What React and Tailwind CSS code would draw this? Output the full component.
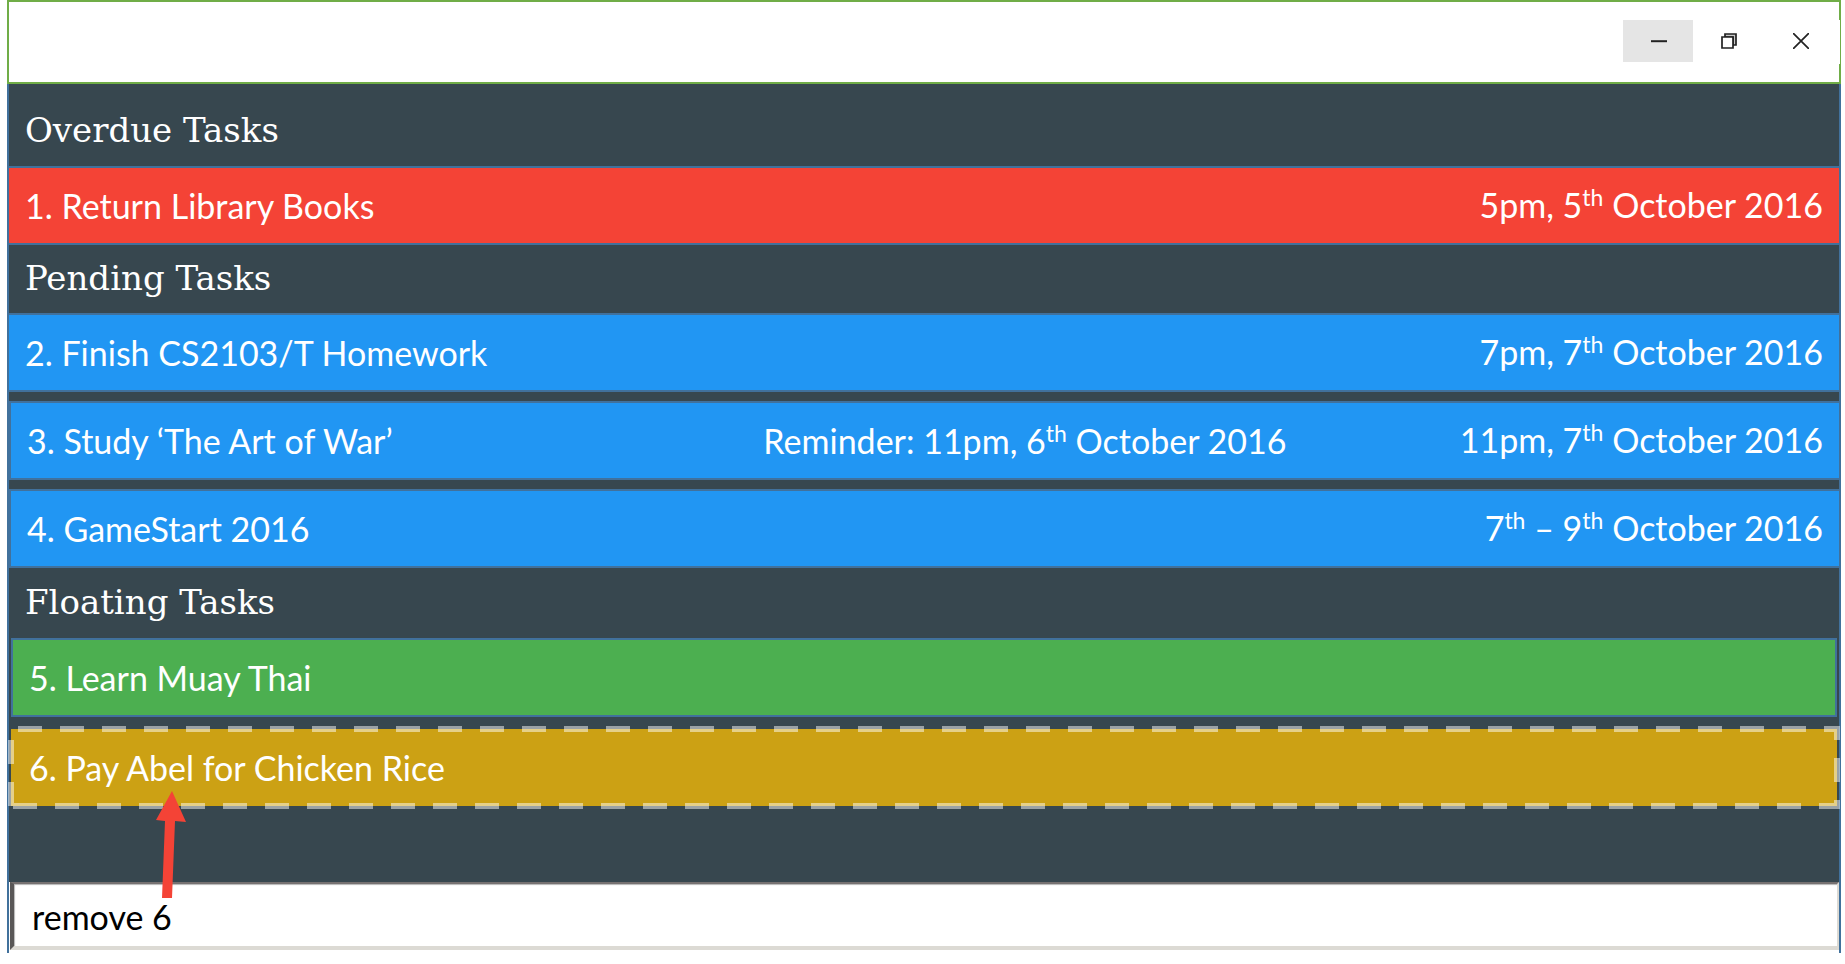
const textFont = "font-['Lato',sans-serif]";
const rowBase = "relative flex h-[79px] items-center border-[#41719c] px-4";
const dateClass = "ml-auto pb-[2px]";

function Ordinal({ n }) {
  return (
    <>
      {n}
      <sup className="relative -top-3 align-baseline text-[23px] leading-none">th</sup>
    </>
  );
}

function SectionTitle({ children, className }) {
  return (
    <h2
      className={`flex items-center px-4 font-['DejaVu_Serif',serif] text-[34px] leading-10 font-normal ${className}`}
    >
      {children}
    </h2>
  );
}

function SelectionOutline() {
  return (
    <svg
      className="pointer-events-none absolute -inset-[3px] h-[calc(100%+6px)] w-[calc(100%+6px)]"
      aria-hidden="true"
    >
      <g opacity="0.5" stroke="#fff" strokeWidth="6" strokeDasharray="24 18">
        <line x1="0" y1="3" x2="100%" y2="3" strokeDashoffset="32" />
        <line x1="100%" y1="0" x2="100%" y2="100%" strokeDashoffset="10" transform="translate(-3 0)" />
        <line x1="100%" y1="100%" x2="0" y2="100%" strokeDashoffset="3" transform="translate(0 -3)" />
        <line x1="3" y1="100%" x2="3" y2="0" transform="translate(0 -3)" />
      </g>
    </svg>
  );
}

function TitleBar() {
  return (
    <header className="flex h-[84px] items-start justify-end border-2 border-[#70ad47] bg-white pt-[18px] text-[#222]">
      <button aria-label="Minimize" className="flex h-[42px] w-[70px] items-center justify-center bg-[#e5e5e5] pl-[2px]">
        <svg width="16" height="16" viewBox="0 0 16 16">
          <path d="M0 8.2h16" stroke="currentColor" strokeWidth="2" />
        </svg>
      </button>
      <button aria-label="Restore" className="flex h-[42px] w-[72px] items-center justify-center">
        <svg width="16" height="16" viewBox="0 0 16 16" fill="none" stroke="currentColor" strokeWidth="1.7">
          <path d="M4 4V1h11v11h-3V4z" fill="#c8c8c8" />
          <path d="M1 4h11v11H1z" fill="#fff" />
        </svg>
      </button>
      <button aria-label="Close" className="-mr-px flex h-[44px] w-[75px] items-center justify-center bg-white pr-[4px] pb-[3px]">
        <svg width="16" height="16" viewBox="0 0 16 16" stroke="currentColor" strokeWidth="1.7">
          <path d="M0 0l16 16M16 0L0 16" />
        </svg>
      </button>
    </header>
  );
}

export default function App() {
  return (
    <div className="min-h-screen bg-white pr-1 pl-[7px]">
      <TitleBar />
      <main className={`border-x-2 border-[#41719c] bg-[#37474f] text-[34px] leading-10 text-white ${textFont}`}>
        <SectionTitle className="h-[82px] pt-[10px]">Overdue Tasks</SectionTitle>
        <ul>
          <li className={`${rowBase} border-y-2 bg-[#f44336]`}>
            <span>1. Return Library Books</span>
            <span className={dateClass}>
              5pm, <Ordinal n="5" /> October 2016
            </span>
          </li>
        </ul>
        <SectionTitle className="h-[68px] pb-[2px]">Pending Tasks</SectionTitle>
        <ul className="flex flex-col gap-[9px]">
          <li className={`${rowBase} border-y-2 bg-[#2196f3]`}>
            <span>2. Finish CS2103/T Homework</span>
            <span className={dateClass}>
              7pm, <Ordinal n="7" /> October 2016
            </span>
          </li>
          <li className={`${rowBase} border-y-2 border-l-2 bg-[#2196f3]`}>
            <span className="w-[41%]">3. Study ‘The Art of War’</span>
            <span>
              Reminder: 11pm, <Ordinal n="6" /> October 2016
            </span>
            <span className={dateClass}>
              11pm, <Ordinal n="7" /> October 2016
            </span>
          </li>
          <li className={`${rowBase} border-y-2 border-l-2 bg-[#2196f3]`}>
            <span>4. GameStart 2016</span>
            <span className={dateClass}>
              <Ordinal n="7" /> – <Ordinal n="9" /> October 2016
            </span>
          </li>
        </ul>
        <SectionTitle className="h-[70px] pb-[2px]">Floating Tasks</SectionTitle>
        <ul className="flex flex-col gap-3 px-[2px]">
          <li className={`${rowBase} border-2 bg-[#4caf50]`}>
            <span>5. Learn Muay Thai</span>
          </li>
          <li className="relative flex h-[77px] items-center bg-[#cca114] px-[18px]">
            <span>6. Pay Abel for Chicken Rice</span>
            <SelectionOutline />
            <svg className="absolute top-[62px] left-[144px]" width="32" height="108" viewBox="0 0 32 108" aria-hidden="true">
              <path d="M17 0L31 31L20 30L17 107L7 107L10 30L1 29Z" fill="#f44336" />
            </svg>
          </li>
        </ul>
        <form className="mt-[76px] bg-white pb-[3px] pl-px" onSubmit={(e) => e.preventDefault()}>
          <input
            aria-label="Command"
            defaultValue="remove 6"
            className="block h-[68px] w-full border-t-2 border-r-2 border-b-4 border-l-4 border-t-[#767171] border-r-[#dcdad4] border-b-[#dcdad4] border-l-[#595757] bg-white px-[18px] pt-[3px] text-black shadow-[inset_1px_1px_1px_#b5b5b5] outline-none"
          />
        </form>
      </main>
    </div>
  );
}
